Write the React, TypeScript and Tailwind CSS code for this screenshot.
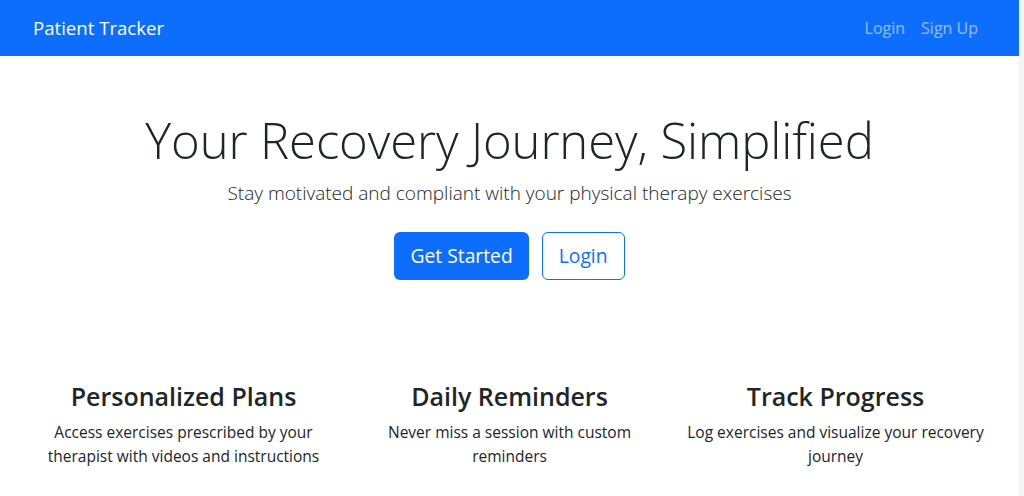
import { useState } from 'react';

const features = [
  { title: 'Personalized Plans', body: 'Access exercises prescribed by your therapist with videos and instructions' },
  { title: 'Daily Reminders', body: 'Never miss a session with custom reminders' },
  { title: 'Track Progress', body: 'Log exercises and visualize your recovery journey' },
];

export default function App() {
  const [page, setPage] = useState('home');

  return (
    <div className="flex min-h-[496px] bg-white text-[#212529]" style={{ fontFamily: '"Open Sans", "Noto Sans", sans-serif' }}>
      <div className="flex-1">
        <nav className="h-[56px] bg-[#0d6efd] flex items-center justify-between pl-[33px] pr-[41px]">
          <a href="#" onClick={() => setPage('home')} className="text-white text-[18.6px] leading-none">Patient Tracker</a>
          <div className="flex items-center gap-[16px] text-[16px] text-white/55">
            <a href="#" onClick={() => setPage('login')} className="hover:text-white/75">Login</a>
            <a href="#" onClick={() => setPage('signup')} className="hover:text-white/75">Sign Up</a>
          </div>
        </nav>

        <section className="flex flex-col items-center pt-[54px] text-center">
          <h1 className="text-[49px] leading-[61px] font-light tracking-[-0.1px]">Your Recovery Journey, Simplified</h1>
          <p className="mt-[7px] text-[19px] leading-[30px] font-light">Stay motivated and compliant with your physical therapy exercises</p>
          <div className="mt-[24px] flex gap-[13px]">
            <button className="h-[48px] px-[16px] rounded-[6px] bg-[#0d6efd] text-white text-[19.3px]">Get Started</button>
            <button className="h-[48px] px-[16px] rounded-[6px] border border-[#0d6efd] text-[#0d6efd] text-[19.3px]">Login</button>
          </div>
        </section>

        <section className="mt-[100px] mx-auto w-[978px] grid grid-cols-3 text-center">
          {features.map((f) => (
            <div key={f.title} className="px-[12px]">
              <h3 className="text-[25px] leading-[32px] font-semibold">{f.title}</h3>
              <p className="mt-[8px] text-[15.5px] leading-[24px]">{f.body}</p>
            </div>
          ))}
        </section>
        {page !== 'home' && <span className="sr-only">{page}</span>}
      </div>
      <div className="w-[5px] bg-[#f4f4f4]" />
    </div>
  );
}
